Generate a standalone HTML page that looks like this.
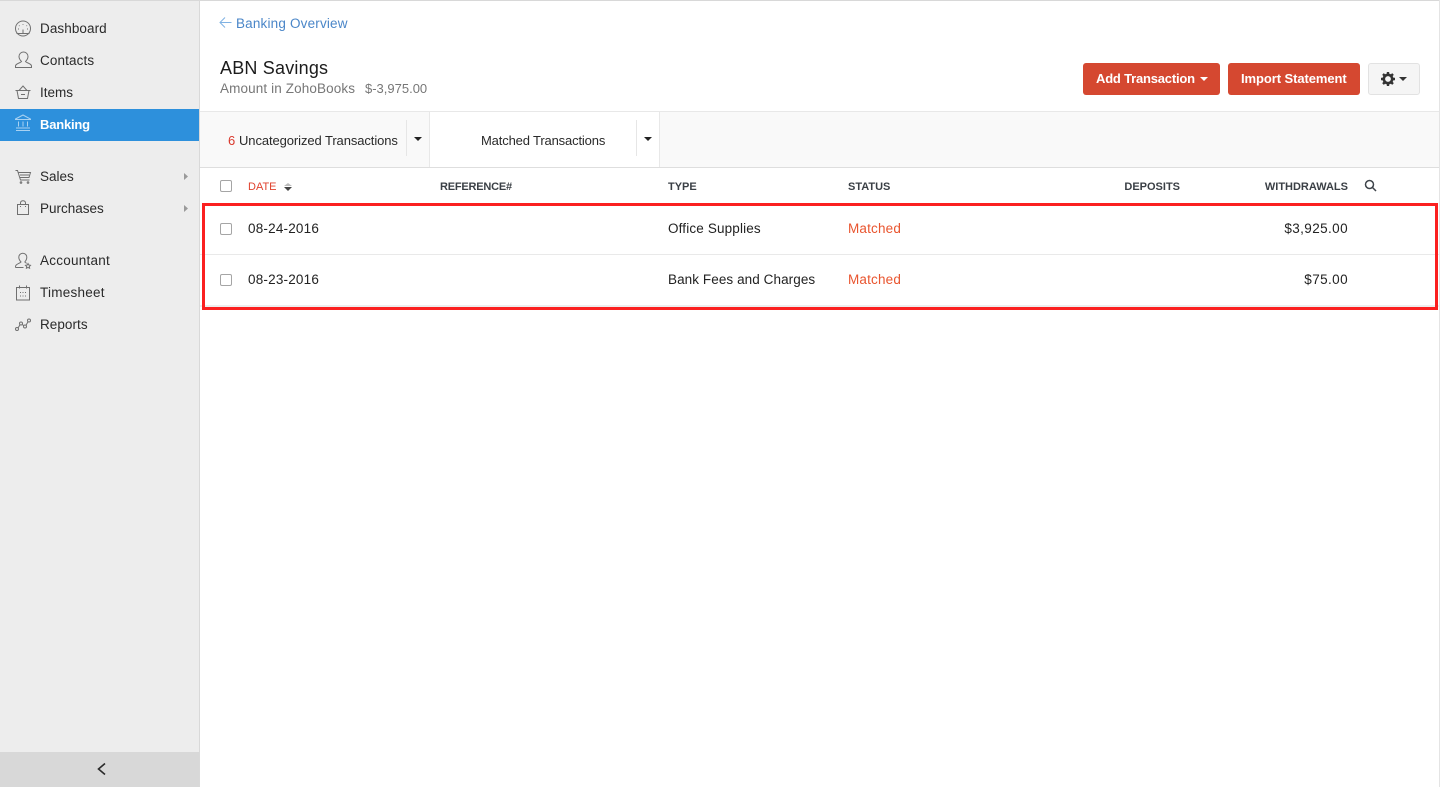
<!DOCTYPE html>
<html><head><meta charset="utf-8"><title>ABN Savings</title>
<style>
*{box-sizing:border-box}
html,body{margin:0;padding:0;width:1440px;height:787px;overflow:hidden;background:#fff;font-family:"Liberation Sans",sans-serif;color:#222}
.a{position:absolute;white-space:nowrap;line-height:16px;font-size:13px}
.m{font-size:13.5px}
.b{position:absolute}
.nav{color:#2a2a2a;font-size:13.5px}
.th{font-size:11px;font-weight:bold;color:#3a3f45}
svg{position:absolute;overflow:visible;fill:none}
.cb{position:absolute;width:12px;height:12px;border:1px solid #a5a5a5;border-radius:2px;background:#fff}
</style></head><body>
<div class="b" style="left:0;top:0;width:1440px;height:1px;background:#d8d8d8"></div>
<div class="b" style="left:1439px;top:0;width:1px;height:787px;background:#e4e4e4"></div>
<div class="b" style="left:0;top:1px;width:199px;height:786px;background:#ededed"></div>
<div class="b" style="left:199px;top:0;width:1px;height:787px;background:#d9d9d9"></div>
<div class="b" style="left:0;top:109px;width:199px;height:32px;background:#2d90dc"></div>
<div class="b" style="left:0;top:752px;width:199px;height:35px;background:#d8d8d8"></div>

<svg style="left:0;top:0" width="200" height="340" stroke="#707070" stroke-width="1">
<circle cx="23" cy="28.5" r="7.5"/><path d="M23 29.5V33M19 25.5l.5.5M23 24v.7M27 25.5l-.5.5M18 29h1M27 29h1M16.500 33.500h13"/>
<path d="M15.500 67.500v-1.500c0-2.500 5-3 6-4.500-1.500-1.500-2.500-3.500-2.500-5 0-2.500 2-4.500 4.500-4.500s4.500 2 4.500 4.500c0 1.500-1 3.500-2.500 5 1 1.500 6 2 6 4.500v1.500z"/>
<path d="M15.500 90.500h15M17 90.500l1.500 8h9l1.500-8M19 90.500l4-4.500 4 4.500M21 94.500h4"/>
<path d="M15.500 119l7.500-4 7.500 4v.5h-15zM18.500 121.500v5M23 121.500v5M27.500 121.500v5M16 128h14M16 130.500h14" stroke="#a9d2f2"/>
<path d="M15.500 170.500h2l3 9.500h9M18.500 172.500h12l-1.500 5h-9M20 175h9"/>
<circle cx="21" cy="182.500" r=".8"/><circle cx="28" cy="182.500" r=".8"/>
<path d="M17.500 204.500h11v10h-11zM20.500 204.500v-1.500c0-3 5-3 5 0v1.500M20.500 206v1M25.500 206v1"/>
<path d="M15.500 267.500v-1c0-2.500 4.500-3 5.500-4.500-1.300-1.500-2.200-3.300-2.200-4.800 0-2.300 1.800-4 4-4s4 1.700 4 4c0 1.500-.8 3.300-2 4.800.4.600 1.200 1 2 1.300M15.500 267.500h8"/>
<path d="M28 263.500l.8 1.500 1.700.3-1.200 1.200.3 1.700-1.600-.8-1.600.8.3-1.700-1.200-1.200 1.700-.3z"/>
<path d="M16.500 287.500h13v12.500h-13zM19.500 285.500v3M26.500 285.500v3M20 292.500h1M25 292.500h1M22.500 292.500h1M20 296h1M25 296h1M22.500 296h1"/>
<circle cx="17" cy="329" r="1.500"/><circle cx="21" cy="323.500" r="1.500"/><circle cx="25" cy="326.500" r="1.500"/><circle cx="29" cy="320.500" r="1.500"/>
<path d="M18 328l2-3.200M22 324.500l2 1.200M26 325.200l2-3.500"/>
<path d="M184 173l4 3.500-4 3.500zM184 205l4 3.500-4 3.500z" fill="#9a9a9a" stroke="none"/>
<path d="M105 763.500l-6.500 5.500 6.500 5.500" stroke="#2b2b2b" stroke-width="1.600"/>
</svg>

<div class="a nav" style="left:40px;top:21px;letter-spacing:.08px">Dashboard</div>
<div class="a nav" style="left:40px;top:53px;letter-spacing:.12px">Contacts</div>
<div class="a nav" style="left:40px;top:85px">Items</div>
<div class="a" style="left:40px;top:117px;color:#fff;font-weight:bold;letter-spacing:-.2px">Banking</div>
<div class="a nav" style="left:40px;top:169px">Sales</div>
<div class="a nav" style="left:40px;top:201px">Purchases</div>
<div class="a nav" style="left:40px;top:253px;letter-spacing:.25px">Accountant</div>
<div class="a nav" style="left:40px;top:285px;letter-spacing:.25px">Timesheet</div>
<div class="a nav" style="left:40px;top:317px;letter-spacing:.05px">Reports</div>

<svg style="left:0;top:0" width="300" height="40" stroke="#7fb2e3" stroke-width="1">
<path d="M231.500 22.500h-11M225 17.500l-5 5 5 5"/>
</svg>
<div class="a m" style="left:236px;top:16px;color:#4a86c8;letter-spacing:.18px">Banking Overview</div>
<div class="a" style="left:220px;top:58px;font-size:18px;line-height:20px;color:#1c1c1c;letter-spacing:.2px">ABN Savings</div>
<div class="a m" style="left:220px;top:81px;color:#777;letter-spacing:.12px">Amount in ZohoBooks</div>
<div class="a" style="left:365px;top:81px;color:#777">$-3,975.00</div>

<div class="b" style="left:1083px;top:63px;width:137px;height:32px;background:#d54830;border-radius:3px"></div>
<div class="a" style="left:1096px;top:71px;color:#fff;font-weight:bold;letter-spacing:-.2px">Add Transaction</div>
<div class="b" style="left:1200px;top:77px;border:4px solid transparent;border-top-color:#fff;border-bottom:0"></div>
<div class="b" style="left:1228px;top:63px;width:132px;height:32px;background:#d54830;border-radius:3px"></div>
<div class="a" style="left:1241px;top:71px;color:#fff;font-weight:bold;letter-spacing:-.08px">Import Statement</div>
<div class="b" style="left:1368px;top:63px;width:52px;height:32px;background:#f5f5f5;border:1px solid #e2e2e2;border-radius:3px"></div>
<svg style="left:1381px;top:72px" width="16" height="16">
<circle cx="7" cy="7" r="4.200" stroke="#333" stroke-width="2.600"/>
<path d="M7 0v14M0 7h14M2 2l10 10M12 2L2 12" stroke="#333" stroke-width="2.400" stroke-dasharray="2.200 9.800"/>
</svg>
<div class="b" style="left:1399px;top:77px;border:4px solid transparent;border-top-color:#333;border-bottom:0"></div>

<div class="b" style="left:200px;top:111px;width:1239px;height:57px;background:#f9f9f9;border-top:1px solid #e8e8e8;border-bottom:1px solid #dedede"></div>
<div class="b" style="left:429px;top:112px;width:231px;height:55px;background:#fff;border-left:1px solid #e8e8e8;border-right:1px solid #e8e8e8"></div>
<div class="b" style="left:406px;top:120px;width:1px;height:36px;background:#e6e6e6"></div>
<div class="b" style="left:636px;top:120px;width:1px;height:36px;background:#e6e6e6"></div>
<div class="a" style="left:228px;top:133px;color:#d9372b">6</div>
<div class="a" style="left:239px;top:133px;color:#2a2a2a;letter-spacing:-.09px">Uncategorized Transactions</div>
<div class="b" style="left:414px;top:137px;border:4px solid transparent;border-top-color:#222;border-bottom:0"></div>
<div class="a" style="left:481px;top:133px;color:#2a2a2a;letter-spacing:-.15px">Matched Transactions</div>
<div class="b" style="left:644px;top:137px;border:4px solid transparent;border-top-color:#222;border-bottom:0"></div>

<div class="cb" style="left:220px;top:180px"></div>
<div class="a th" style="left:248px;top:179px;color:#e0432f;font-weight:normal">DATE</div>
<div class="b" style="left:284px;top:183px;border:4px solid transparent;border-top:0;border-bottom:3px solid #bbb"></div>
<div class="b" style="left:284px;top:187px;border:4px solid transparent;border-bottom:0;border-top-color:#444"></div>
<div class="a th" style="left:440px;top:179px;letter-spacing:-.2px">REFERENCE#</div>
<div class="a th" style="left:668px;top:179px">TYPE</div>
<div class="a th" style="left:848px;top:179px">STATUS</div>
<div class="a th" style="right:260px;top:179px">DEPOSITS</div>
<div class="a th" style="right:92px;top:179px">WITHDRAWALS</div>
<svg style="left:1364px;top:179px" width="14" height="14" stroke="#3f454b" stroke-width="1.500">
<circle cx="5.500" cy="5.500" r="4"/><path d="M8.500 8.500l3.500 3.500"/>
</svg>

<div class="b" style="left:200px;top:254px;width:1239px;height:1px;background:#e9e9e9"></div>
<div class="b" style="left:200px;top:305px;width:1239px;height:2px;background:#eee"></div>
<div class="cb" style="left:220px;top:223px"></div>
<div class="a m" style="left:248px;top:221px;letter-spacing:.2px">08-24-2016</div>
<div class="a m" style="left:668px;top:221px;letter-spacing:.15px">Office Supplies</div>
<div class="a m" style="left:848px;top:221px;color:#e9552f;letter-spacing:.18px">Matched</div>
<div class="a m" style="right:92px;top:221px;letter-spacing:.4px">$3,925.00</div>
<div class="cb" style="left:220px;top:274px"></div>
<div class="a m" style="left:248px;top:272px;letter-spacing:.2px">08-23-2016</div>
<div class="a m" style="left:668px;top:272px;letter-spacing:.08px">Bank Fees and Charges</div>
<div class="a m" style="left:848px;top:272px;color:#e9552f;letter-spacing:.18px">Matched</div>
<div class="a m" style="right:92px;top:272px;letter-spacing:.4px">$75.00</div>

<div class="b" style="left:202px;top:203px;width:1236px;height:107px;border:3px solid #fb2020"></div>
</body></html>
